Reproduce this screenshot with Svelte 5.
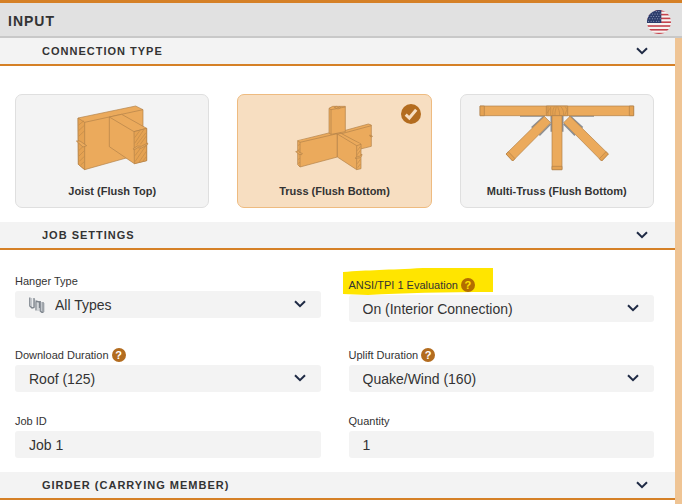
<script lang="ts">
	type Connection = 'joist' | 'truss' | 'multi';

	const connections: { id: Connection; label: string }[] = [
		{ id: 'joist', label: 'Joist (Flush Top)' },
		{ id: 'truss', label: 'Truss (Flush Bottom)' },
		{ id: 'multi', label: 'Multi-Truss (Flush Bottom)' }
	];

	let connection = $state<Connection>('truss');
	let open = $state({ connection: true, job: true, girder: true });

	let hangerType = $state('All Types');
	let evaluation = $state('On (Interior Connection)');
	let downloadDuration = $state('Roof (125)');
	let upliftDuration = $state('Quake/Wind (160)');
	let jobId = $state('Job 1');
	let quantity = $state('1');
</script>

{#snippet chevron()}
	<svg class="chevron" viewBox="0 0 12 8" aria-hidden="true">
		<path d="M1 1.2 6 6.2 11 1.2" />
	</svg>
{/snippet}

{#snippet sectionHeader(title: string, key: 'connection' | 'job' | 'girder')}
	<h2>
		<button
			type="button"
			class="section-toggle"
			aria-expanded={open[key]}
			onclick={() => (open[key] = !open[key])}
		>
			<span>{title}</span>
			{@render chevron()}
		</button>
	</h2>
{/snippet}

{#snippet help(topic: string)}
	<button type="button" class="help" aria-label="Help: {topic}">?</button>
{/snippet}

<div class="panel">
	<header>
		<h1>INPUT</h1>
		<button type="button" class="flag" aria-label="United States">
			<svg viewBox="0 0 24 24" aria-hidden="true">
				<defs>
					<clipPath id="flag-circle"><circle cx="12" cy="12" r="12" /></clipPath>
				</defs>
				<g clip-path="url(#flag-circle)">
					<rect width="24" height="24" fill="#f7f3f1" />
					{#each [0, 1, 2, 3, 4, 5, 6] as stripe}
						<rect y={stripe * 3.8} width="24" height="1.6" fill="#c4424c" />
					{/each}
					<rect width="14.3" height="13" fill="#2d3d6c" />
					{#each [1.6, 4, 6.4, 8.8, 11.2] as y, row}
						{#each [1.5, 4.1, 6.7, 9.3, 11.9] as x}
							<circle cx={x + (row % 2) * 1.3} cy={y} r="0.5" fill="#a9b4d2" />
						{/each}
					{/each}
				</g>
			</svg>
		</button>
	</header>

	<div class="body">
		<main>
			<section>
				{@render sectionHeader('CONNECTION TYPE', 'connection')}
				{#if open.connection}
					<div class="cards" role="radiogroup" aria-label="Connection type">
						{#each connections as item}
							<label class="card" class:selected={connection === item.id}>
								<input type="radio" name="connection" value={item.id} bind:group={connection} />
								{#if item.id === 'joist'}
									<svg class="drawing" viewBox="216 45 240 198" aria-hidden="true">
										<g class="wood">
											<path d="M234 84 407 48 429 59 429 190 254 239 235 223Z" />
											<path d="M234 84 254 97 254 239 235 223Z" class="end" />
											<path d="M254 97 429 59" />
											<path d="M328 81 365 73 440 115 440 212 403 221 328 170Z" />
											<path d="M328 81 402 125 440 115" />
											<path d="M402 125 440 115 440 212 403 221Z" class="end" />
											<path
												class="grain"
												d="M236 105 252 92M236 122 253 106M236 139 253 123M237 181 253 166M237 198 253 182M238 214 253 199M242 225 253 215M404 143 420 121M404 160 432 118M405 215 437 168M416 218 439 184M405 197 422 174M410 164 438 128M421 163 439 138M428 214 439 200"
											/>
											<path d="M229 153 240 153 260 167 249 171Z" />
											<path d="M400 176 412 168 424 169 443 159 443 163 425 174 413 173 402 180Z" />
										</g>
									</svg>
								{:else if item.id === 'truss'}
									<svg class="drawing" viewBox="193 45 240 198" aria-hidden="true">
										<g class="wood">
											<path d="M318 129 416 102 425 105 425 169 340 190Z" />
											<path d="M325 134 425 107" />
											<path d="M420 135 428 138 427 141 421 139Z" />
											<path d="M204 152 309 126 323 132 323 201 211 231 204 224Z" />
											<path d="M204 152 211 157 323 131M211 157 211 231" />
											<path d="M198 185 207 182 210 188 218 190 216 194 208 193 204 189Z" />
											<path d="M298 55 309 49 347 49 347 125 304 133 298 129Z" />
											<path d="M298 55 304 59 347 51M304 59 304 133" />
											<path d="M314 52 320 49 325 53 331 50 333 53 325 57Z" />
											<path d="M323 132 334 130 394 162 394 236 381 239 323 201Z" />
											<path d="M323 132 381 167 394 163M381 167 381 239" />
											<path d="M376 205 383 199 389 199 397 192 396 198 390 204 383 204Z" />
											<path
												class="grain"
												d="M206 167 210 162M206 181 210 176M206 209 210 204M206 221 210 216M383 182 392 169M383 194 392 181M383 221 392 208M384 233 392 222"
											/>
										</g>
									</svg>
								{:else}
									<svg class="drawing" viewBox="81 45 480 198" aria-hidden="true">
										<g class="plates">
											<path d="M210 78H285M357 78H432M304 77V125M338 77V125" />
											<path d="M245 113 282 79M268 136 302 102M398 113 361 79M375 136 341 102" />
										</g>
										<g class="wood">
											<path d="M90 48H551V77H90Z" />
											<path d="M90 48H103V77H90ZM538 48H551V77H538Z" class="end" />
											<path d="M289 48H353V77H289Z" class="end" />
											<path
												class="grain"
												d="M291 70 302 52 302 75M294 50V75M309 77C307 64 309 54 315 49M315 77C314 64 317 61 319 49M323 49C325 59 330 64 329 77M331 49C339 55 341 64 341 77M345 49 351 59 344 76"
											/>
											<path d="M306 77H336V239H306Z" />
											<path d="M306 229H336V239H306Z" class="end" />
											<path d="M283 79 302 98 188 213 168 192Z" />
											<path d="M175 185 195 206 188 213 168 192Z" class="end" />
											<path d="M360 79 341 98 455 213 475 192Z" />
											<path d="M468 185 448 206 455 213 475 192Z" class="end" />
										</g>
									</svg>
								{/if}
								<span>{item.label}</span>
								{#if connection === item.id}
									<svg class="check" viewBox="0 0 20 20" aria-hidden="true">
										<circle cx="10" cy="10" r="10" />
										<path d="M4.7 10.7 8.3 14 15.2 5.8" />
									</svg>
								{/if}
							</label>
						{/each}
					</div>
				{/if}
			</section>

			<section>
				{@render sectionHeader('JOB SETTINGS', 'job')}
				{#if open.job}
					<div class="fields">
						<div class="field">
							<div class="caption"><label for="hanger-type">Hanger Type</label></div>
							<div class="control with-icon">
								<svg class="hanger" viewBox="0 0 16 16" aria-hidden="true">
									<path class="light" d="M2.5 1V10M5.5 2V10M9 5V14M12.5 5V15M15 6V15" />
									<path d="M.8 .5V9L3 11 5 10.5V1M7 4V13.5M6.5 4 10.5 5V11M11.2 4V14L13 15.5H14.5M14 5V15" />
								</svg>
								<select id="hanger-type" bind:value={hangerType}>
									<option>All Types</option>
									<option>Face Mount</option>
									<option>Top Flange</option>
								</select>
								{@render chevron()}
							</div>
						</div>

						<div class="field">
							<div class="caption with-help highlighted">
								<svg class="marker" viewBox="0 0 150 28" aria-hidden="true">
									<path d="M0 4C25 2 45 2 80 0H150V24C100 24 60 25 25 27L0 26Z" />
								</svg>
								<label for="evaluation">ANSI/TPI 1 Evaluation</label>
								{@render help('ANSI/TPI 1 Evaluation')}
							</div>
							<div class="control">
								<select id="evaluation" bind:value={evaluation}>
									<option>On (Interior Connection)</option>
									<option>On (End Connection)</option>
									<option>Off</option>
								</select>
								{@render chevron()}
							</div>
						</div>

						<div class="field">
							<div class="caption with-help">
								<label for="download">Download Duration</label>
								{@render help('Download Duration')}
							</div>
							<div class="control">
								<select id="download" bind:value={downloadDuration}>
									<option>Floor (100)</option>
									<option>Snow (115)</option>
									<option>Roof (125)</option>
								</select>
								{@render chevron()}
							</div>
						</div>

						<div class="field">
							<div class="caption with-help">
								<label for="uplift">Uplift Duration</label>
								{@render help('Uplift Duration')}
							</div>
							<div class="control">
								<select id="uplift" bind:value={upliftDuration}>
									<option>Floor (100)</option>
									<option>Quake/Wind (160)</option>
								</select>
								{@render chevron()}
							</div>
						</div>

						<div class="field">
							<div class="caption"><label for="job-id">Job ID</label></div>
							<div class="control"><input id="job-id" type="text" bind:value={jobId} /></div>
						</div>

						<div class="field">
							<div class="caption"><label for="quantity">Quantity</label></div>
							<div class="control">
								<input id="quantity" type="text" inputmode="numeric" bind:value={quantity} />
							</div>
						</div>
					</div>
				{/if}
			</section>

			<section>
				{@render sectionHeader('GIRDER (CARRYING MEMBER)', 'girder')}
			</section>
		</main>
		<div class="rail"></div>
	</div>
</div>

<style>
	:global(body) {
		margin: 0;
		background: #fff;
	}

	.panel {
		display: flex;
		flex-direction: column;
		min-height: 100vh;
		box-sizing: border-box;
		border-top: 3px solid #d58026;
		color: #333;
		font-family: 'Liberation Sans', Arial, sans-serif;
	}

	button,
	select,
	input {
		font-family: inherit;
		color: inherit;
	}

	header {
		display: flex;
		align-items: center;
		justify-content: space-between;
		height: 33px;
		padding: 2px 11px 0 8px;
		box-sizing: content-box;
		height: 31px;
		background: #e1e1e1;
		border-bottom: 2px solid #c8c8c8;
	}

	h1 {
		margin: 0;
		font-size: 14px;
		line-height: 16px;
		letter-spacing: 1px;
	}

	.flag {
		width: 24px;
		height: 24px;
		margin-top: 2px;
		padding: 0;
		border: 0;
		border-radius: 50%;
		background: none;
		cursor: pointer;
	}

	.flag svg {
		display: block;
		width: 24px;
		height: 24px;
	}

	.body {
		display: flex;
		flex: 1;
	}

	main {
		flex: 1;
		min-width: 0;
	}

	.rail {
		width: 7px;
		background: #efc494;
	}

	h2 {
		margin: 0;
	}

	.section-toggle {
		display: flex;
		align-items: center;
		justify-content: space-between;
		box-sizing: border-box;
		width: 100%;
		height: 28px;
		padding: 0 27px 0 42px;
		border: 0;
		border-bottom: 2px solid #d58026;
		background: #f3f3f3;
		font-size: 11px;
		font-weight: 700;
		line-height: 14px;
		letter-spacing: 1px;
		cursor: pointer;
	}

	.chevron {
		width: 12px;
		height: 8px;
		fill: none;
		stroke: #1f2a44;
		stroke-width: 2;
	}

	.cards {
		display: grid;
		grid-template-columns: repeat(3, 1fr);
		gap: 28px;
		padding: 28px 21px 14px 15px;
	}

	.card {
		position: relative;
		display: flex;
		flex-direction: column;
		align-items: center;
		gap: 13px;
		padding: 10px 0 9px;
		border: 1px solid #dfdfdf;
		border-radius: 7px;
		background: #f3f3f3;
		font-size: 11px;
		font-weight: 700;
		line-height: 14px;
		cursor: pointer;
	}

	.card.selected {
		border-color: #eebb80;
		background: #f7dec1;
	}

	.card input {
		position: absolute;
		opacity: 0;
		margin: 0;
	}

	.drawing {
		height: 66px;
		max-width: 100%;
	}

	.wood path {
		fill: #ebaa5c;
		stroke: #b08048;
		stroke-width: 2;
		stroke-linejoin: round;
	}

	.wood .end {
		fill: #e5a252;
	}

	.wood .grain {
		fill: none;
		stroke: #c08a49;
	}

	.plates path {
		fill: none;
		stroke: #8b8e93;
		stroke-width: 5;
	}

	.check {
		position: absolute;
		top: 9px;
		right: 10px;
		width: 20px;
		height: 20px;
	}

	.check circle {
		fill: #b36c1f;
	}

	.check path {
		fill: none;
		stroke: #f7dec1;
		stroke-width: 3;
	}

	.fields {
		display: grid;
		grid-template-columns: repeat(2, 1fr);
		gap: 23px 28px;
		align-items: start;
		padding: 25px 21px 14px 15px;
	}

	.caption {
		position: relative;
		display: flex;
		align-items: center;
		gap: 3px;
		padding-bottom: 4px;
		font-size: 11px;
		line-height: 12px;
	}

	.with-help {
		padding: 3px 0;
	}

	.help {
		display: flex;
		align-items: center;
		justify-content: center;
		width: 14px;
		height: 14px;
		margin: 0;
		padding: 0;
		border: 0;
		border-radius: 50%;
		background: #b36c1f;
		color: #fff;
		font-size: 11px;
		font-weight: 700;
		line-height: 14px;
		cursor: pointer;
	}

	.highlighted .help {
		background: #b36d00;
		color: #ffe500;
	}

	.highlighted label,
	.highlighted .help {
		z-index: 1;
	}

	.marker {
		position: absolute;
		top: -7px;
		left: -6px;
		width: 150px;
		height: 28px;
		fill: #ffe500;
	}

	.control {
		position: relative;
	}

	.control .chevron {
		position: absolute;
		top: 9px;
		right: 15px;
		pointer-events: none;
	}

	select,
	.control input {
		display: block;
		box-sizing: border-box;
		width: 100%;
		height: 27px;
		margin: 0;
		padding: 0 40px 0 14px;
		border: 0;
		border-radius: 3px;
		background: #f3f3f3;
		font-size: 14px;
		line-height: 18px;
		appearance: none;
	}

	.with-icon select {
		padding-left: 40px;
	}

	.hanger {
		position: absolute;
		top: 6px;
		left: 14px;
		width: 16px;
		height: 16px;
		fill: none;
		stroke: #7d848c;
		stroke-width: 1.3;
		pointer-events: none;
	}

	.hanger .light {
		stroke: #c3c8cd;
	}
</style>
